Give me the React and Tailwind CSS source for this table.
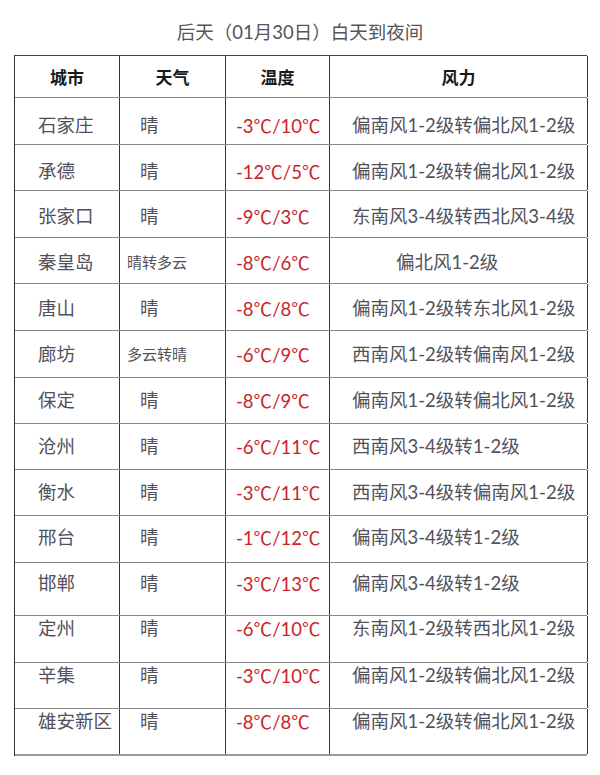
import React from "react";

const rows = [
  { city: "石家庄", w: "晴", t: ["-3", "/10"], f: "偏南风1-2级转偏北风1-2级", h: "h-[47px]", pt: "pt-[15px]" },
  { city: "承德", w: "晴", t: ["-12", "/5"], f: "偏南风1-2级转偏北风1-2级", h: "h-[46px]", pt: "pt-[14px]" },
  { city: "张家口", w: "晴", t: ["-9", "/3"], f: "东南风3-4级转西北风3-4级", h: "h-[47px]", pt: "pt-[13px]" },
  { city: "秦皇岛", w: "晴转多云", small: true, t: ["-8", "/6"], f: "偏北风1-2级", center: true, h: "h-[46px]", pt: "pt-[12px]" },
  { city: "唐山", w: "晴", t: ["-8", "/8"], f: "偏南风1-2级转东北风1-2级", h: "h-[47px]", pt: "pt-[12px]" },
  { city: "廊坊", w: "多云转晴", small: true, t: ["-6", "/9"], f: "西南风1-2级转偏南风1-2级", h: "h-[47px]", pt: "pt-[11px]" },
  { city: "保定", w: "晴", t: ["-8", "/9"], f: "偏南风1-2级转偏北风1-2级", h: "h-[46px]", pt: "pt-[10px]" },
  { city: "沧州", w: "晴", t: ["-6", "/11"], f: "西南风3-4级转1-2级", h: "h-[46px]", pt: "pt-[10px]" },
  { city: "衡水", w: "晴", t: ["-3", "/11"], f: "西南风3-4级转偏南风1-2级", h: "h-[46px]", pt: "pt-[10px]" },
  { city: "邢台", w: "晴", t: ["-1", "/12"], f: "偏南风3-4级转1-2级", h: "h-[47px]", pt: "pt-[9px]" },
  { city: "邯郸", w: "晴", t: ["-3", "/13"], f: "偏南风3-4级转1-2级", h: "h-[53px]", pt: "pt-[8px]" },
  { city: "定州", w: "晴", t: ["-6", "/10"], f: "东南风1-2级转西北风1-2级", h: "h-[47px]", pt: "pt-0" },
  { city: "辛集", w: "晴", t: ["-3", "/10"], f: "偏南风1-2级转偏北风1-2级", h: "h-[46px]", pt: "pt-0" },
  { city: "雄安新区", w: "晴", t: ["-8", "/8"], f: "偏南风1-2级转偏北风1-2级", h: "h-[47px]", pt: "pt-0" },
];

const font = { fontFamily: "Lato, 'Noto Sans CJK SC', sans-serif" };

function Deg() {
  return <span style={{ fontFamily: "'Noto Sans CJK SC', sans-serif" }}>℃</span>;
}

export default function App() {
  return (
    <div className="w-[600px] h-[775px] bg-white" style={font}>
      <div className="pt-[19px] h-[55px] text-center text-[18.5px] leading-[26px] text-[#555]">
        后天（01月30日）白天到夜间
      </div>
      <div className="ml-[14px] w-[573px] border-t border-[#444] border-l border-l-[#333]">
        <div className="grid grid-cols-[105px_106px_104px_258px] h-[42px] border-b border-[#888] text-[17px] font-bold text-[#1a1a1a] leading-[24px]">
          <div className="border-r border-[#333] text-center pt-[10px]">城市</div>
          <div className="border-r border-[#333] text-center pt-[10px]">天气</div>
          <div className="border-r border-[#333] text-center pt-[10px]">温度</div>
          <div className="border-r border-[#333] text-center pt-[10px]">风力</div>
        </div>
        {rows.map((r, i) => (
          <div
            key={i}
            className={`grid grid-cols-[105px_106px_104px_258px] ${r.h} border-b ${i === rows.length - 1 ? "border-[#999] border-b-2" : "border-[#888]"} text-[18.5px] leading-[24px] text-[#51515c]`}
          >
            <div className={`border-r border-[#333] pl-[23px] ${r.pt} whitespace-nowrap`}>{r.city}</div>
            <div className={`border-r border-[#333] ${r.small ? "pl-[7px] text-[15px]" : "pl-[20px]"} ${r.pt} whitespace-nowrap`}>{r.w}</div>
            <div className={`border-r border-[#333] pl-[10px] ${r.pt} text-[#c9242a] whitespace-nowrap`}>
              {r.t[0]}
              <Deg />
              {r.t[1]}
              <Deg />
            </div>
            <div className={`border-r border-[#333] ${r.center ? "pl-[66px]" : "pl-[22px]"} ${r.pt} whitespace-nowrap`}>{r.f}</div>
          </div>
        ))}
      </div>
    </div>
  );
}
